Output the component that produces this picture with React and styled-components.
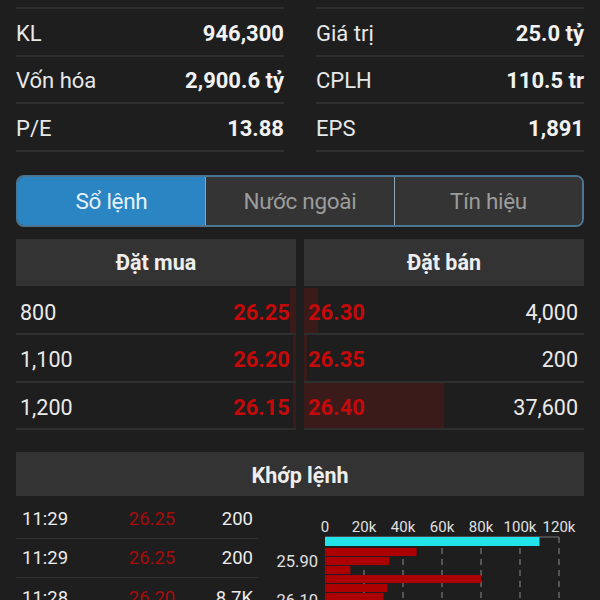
import React from 'react';
import styled, { createGlobalStyle } from 'styled-components';

const Global = createGlobalStyle`
    html, body {
        margin: 0;
        background: #1e1e1e;
        font-family: Roboto, "Noto Sans", "Liberation Sans", sans-serif;
        color: #e6e6e6;
    }
`;

const Page = styled.div`
    width: 600px;
    height: 600px;
    overflow: hidden;
    padding: 7px 16px 0;
    box-sizing: border-box;
`;

const StatsGrid = styled.div`
    display: grid;
    grid-template-columns: 268px 268px;
    column-gap: 32px;
`;

const StatCol = styled.div`
    border-top: 2px solid #2f2f2f;
`;

const StatRow = styled.div`
    height: 47.5px;
    display: flex;
    align-items: center;
    justify-content: space-between;
    border-bottom: 2px solid #2f2f2f;
    font-size: 22px;
    padding-top: 3px;
    box-sizing: border-box;
`;

const StatLabel = styled.span`
    color: #e8e8e8;
`;

const StatValue = styled.span`
    font-weight: 700;
    color: #f2f2f2;
`;

const Tabs = styled.div`
    margin-top: 23px;
    height: 52px;
    display: grid;
    grid-template-columns: 187px 189px 1fr;
    border: 2px solid #4a7694;
    border-radius: 8px;
    overflow: hidden;
    box-sizing: border-box;
    background: #343434;
`;

const Tab = styled.div`
    display: flex;
    align-items: center;
    justify-content: center;
    font-size: 22.5px;
    letter-spacing: -0.3px;
    padding-top: 1px;
    background: ${(p) => (p.$active ? '#2b85c2' : '#343434')};
    color: ${(p) => (p.$active ? '#e4f2ff' : '#9c9c9c')};
    border-left: ${(p) => (p.$first ? 'none' : '1px solid #8fa3b3')};
`;

const BookGrid = styled.div`
    margin-top: 12px;
    display: grid;
    grid-template-columns: 280px 280px;
    column-gap: 8px;
`;

const Header = styled.div`
    height: 47px;
    display: flex;
    align-items: center;
    justify-content: center;
    background: #333333;
    font-size: 21.5px;
    font-weight: 700;
    color: #eeeeee;
`;

const BookList = styled.div`
    margin-top: 2px;
`;

const BookRow = styled.div`
    position: relative;
    height: 47.5px;
    display: flex;
    align-items: center;
    justify-content: space-between;
    padding: 4px 6px 0 4px;
    border-bottom: 2px solid #2f2f2f;
    box-sizing: border-box;
    font-size: 21.5px;
`;

const DepthBar = styled.div`
    position: absolute;
    top: 0;
    bottom: 0;
    ${(p) => (p.$side === 'buy' ? 'right: 0;' : 'left: 0;')}
    background: rgba(100, 22, 22, 0.42);
`;

const Qty = styled.span`
    position: relative;
    color: #eaeaea;
`;

const Price = styled.span`
    position: relative;
    color: #c40a0a;
    font-weight: 700;
    font-size: 22px;
`;

const MatchHeader = styled(Header)`
    margin-top: 22px;
    height: 44px;
    padding-top: 2px;
    box-sizing: border-box;
`;

const MatchBody = styled.div`
    display: grid;
    grid-template-columns: 242px 1fr;
    column-gap: 12px;
    margin-top: 3px;
`;

const TradeRow = styled.div`
    height: 39.5px;
    display: grid;
    grid-template-columns: 80px 100px 1fr;
    align-items: center;
    padding: 1px 5px 0 6px;
    border-bottom: 1px solid #333333;
    box-sizing: border-box;
    font-size: 18.5px;
`;

const Time = styled.span`
    color: #ececec;
`;

const TradePrice = styled.span`
    text-align: center;
    color: #a50c0c;
`;

const TradeVol = styled.span`
    text-align: right;
    color: #ececec;
`;

const Chart = styled.svg`
    display: block;
    font-family: Roboto, "Noto Sans", sans-serif;
`;

const stats = [
    [['KL', '946,300'], ['Vốn hóa', '2,900.6 tỷ'], ['P/E', '13.88']],
    [['Giá trị', '25.0 tỷ'], ['CPLH', '110.5 tr'], ['EPS', '1,891']],
];

const buys = [
    { qty: '800', price: '26.25', depth: 2 },
    { qty: '1,100', price: '26.20', depth: 1 },
    { qty: '1,200', price: '26.15', depth: 1 },
];

const sells = [
    { qty: '4,000', price: '26.30', depth: 5 },
    { qty: '200', price: '26.35', depth: 1 },
    { qty: '37,600', price: '26.40', depth: 50 },
];

const trades = [
    ['11:29', '26.25', '200'],
    ['11:29', '26.25', '200'],
    ['11:28', '26.20', '8.7K'],
];

const ticks = ['0', '20k', '40k', '60k', '80k', '100k', '120k'];
const redBars = [47, 33, 13, 80, 32, 30, 28];

function VolumeChart() {
    const x0 = 55;
    const step = 39;
    const px = (k) => (k / 20) * step;
    return (
        <Chart width="314" height="110">
            {ticks.map((t, i) => (
                <text key={t} x={x0 + i * step} y="33" fill="#e0e0e0" fontSize="15" textAnchor="middle">
                    {t}
                </text>
            ))}
            <line x1={x0} y1="38" x2={x0 + 6 * step} y2="38" stroke="#777" strokeWidth="1" />
            {ticks.slice(1).map((t, i) => (
                <line key={t} x1={x0 + (i + 1) * step} y1="38" x2={x0 + (i + 1) * step} y2="110"
                    stroke="#8a8a8a" strokeWidth="1" strokeDasharray="6 5" />
            ))}
            <rect x={x0} y="38" width={px(110)} height="9" fill="#22e5ec" />
            {redBars.map((k, i) => (
                <rect key={i} x={x0} y={49 + i * 9} width={px(k)} height="8" fill="#ad0000" />
            ))}
            <text x="48" y="68" fill="#e0e0e0" fontSize="16.5" textAnchor="end">25.90</text>
            <text x="48" y="107" fill="#e0e0e0" fontSize="16.5" textAnchor="end">26.10</text>
        </Chart>
    );
}

export default function App() {
    return (
        <Page>
            <Global />
            <StatsGrid>
                {stats.map((col, ci) => (
                    <StatCol key={ci}>
                        {col.map(([label, value]) => (
                            <StatRow key={label}>
                                <StatLabel>{label}</StatLabel>
                                <StatValue>{value}</StatValue>
                            </StatRow>
                        ))}
                    </StatCol>
                ))}
            </StatsGrid>

            <Tabs>
                <Tab $active $first>Sổ lệnh</Tab>
                <Tab>Nước ngoài</Tab>
                <Tab>Tín hiệu</Tab>
            </Tabs>

            <BookGrid>
                <div>
                    <Header>Đặt mua</Header>
                    <BookList>
                        {buys.map((b) => (
                            <BookRow key={b.price}>
                                <DepthBar $side="buy" style={{ width: `${b.depth}%` }} />
                                <Qty>{b.qty}</Qty>
                                <Price>{b.price}</Price>
                            </BookRow>
                        ))}
                    </BookList>
                </div>
                <div>
                    <Header>Đặt bán</Header>
                    <BookList>
                        {sells.map((s) => (
                            <BookRow key={s.price}>
                                <DepthBar $side="sell" style={{ width: `${s.depth}%` }} />
                                <Price>{s.price}</Price>
                                <Qty>{s.qty}</Qty>
                            </BookRow>
                        ))}
                    </BookList>
                </div>
            </BookGrid>

            <MatchHeader>Khớp lệnh</MatchHeader>
            <MatchBody>
                <div>
                    {trades.map(([t, p, v], i) => (
                        <TradeRow key={i}>
                            <Time>{t}</Time>
                            <TradePrice>{p}</TradePrice>
                            <TradeVol>{v}</TradeVol>
                        </TradeRow>
                    ))}
                </div>
                <VolumeChart />
            </MatchBody>
        </Page>
    );
}
